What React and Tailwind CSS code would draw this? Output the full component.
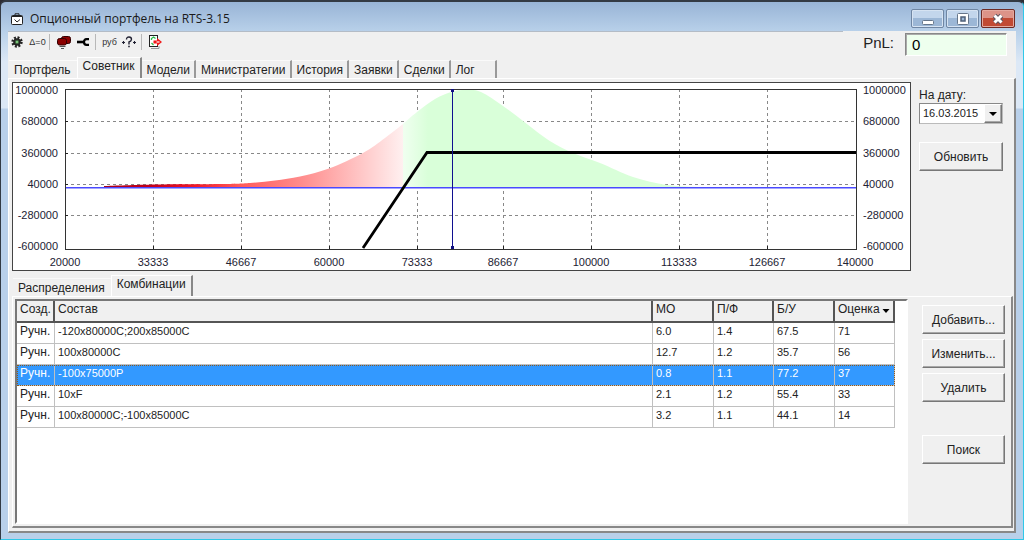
import React, { useState } from "react";

const mainTabs = ["Портфель", "Советник", "Модели", "Министратегии", "История", "Заявки", "Сделки", "Лог"];
const subTabs = ["Распределения", "Комбинации"];

const rows = [
  ["Ручн.", "-120x80000C;200x85000C", "6.0", "1.4", "67.5", "71"],
  ["Ручн.", "100x80000C", "12.7", "1.2", "35.7", "56"],
  ["Ручн.", "-100x75000P", "0.8", "1.1", "77.2", "37"],
  ["Ручн.", "10xF", "2.1", "1.2", "55.4", "33"],
  ["Ручн.", "100x80000C;-100x85000C", "3.2", "1.1", "44.1", "14"],
];

const yTicks = [
  { y: 90, label: "1000000" },
  { y: 121, label: "680000" },
  { y: 153, label: "360000" },
  { y: 184, label: "40000" },
  { y: 215, label: "-280000" },
  { y: 246, label: "-600000" },
];

const xTicks = [
  { x: 65, label: "20000" },
  { x: 153, label: "33333" },
  { x: 241, label: "46667" },
  { x: 329, label: "60000" },
  { x: 417, label: "73333" },
  { x: 503, label: "86667" },
  { x: 591, label: "100000" },
  { x: 679, label: "113333" },
  { x: 767, label: "126667" },
  { x: 855, label: "140000" },
];

const lossCurve = [
  [104, 186], [156, 184.5], [225, 184], [250, 183], [275, 180.5], [300, 176.5],
  [329, 168.5], [363, 153], [385, 138], [403, 124],
];

const profitCurve = [
  [403, 124], [417, 112], [435, 99], [453, 91.5], [467, 90], [481, 92], [503, 106],
  [525, 122.5], [549, 140.5], [573, 153], [600, 163], [633, 177], [667, 185], [700, 187],
];

// Catmull-Rom spline through the points, closed down to the zero line
function area(points) {
  let d = `M${points[0][0]} 188V${points[0][1]}`;
  for (let i = 0; i < points.length - 1; i++) {
    const p0 = points[i - 1] || points[i];
    const p1 = points[i];
    const p2 = points[i + 1];
    const p3 = points[i + 2] || p2;
    d += `C${p1[0] + (p2[0] - p0[0]) / 6} ${p1[1] + (p2[1] - p0[1]) / 6} ${p2[0] - (p3[0] - p1[0]) / 6} ${
      p2[1] - (p3[1] - p1[1]) / 6
    } ${p2[0]} ${p2[1]}`;
  }
  return d + "V188Z";
}

const bevel =
  "border border-t-white border-l-white border-r-[#777] border-b-[#777] shadow-[inset_-1px_-1px_0_#a8a8a8]";

function PushButton({ children, className = "" }) {
  return (
    <button type="button" className={`h-[29px] w-full bg-[#f0f0f0] text-center ${bevel} ${className}`}>
      {children}
    </button>
  );
}

function Separator() {
  return <span className="h-4 w-px bg-[#b8b8b8]" />;
}

function ToolButton({ label, children, className = "" }) {
  return (
    <button type="button" aria-label={label} className={`flex h-4 items-center justify-center ${className}`}>
      {children}
    </button>
  );
}

function TitleBar() {
  return (
    <header className="flex h-[29px] items-center pt-1">
      <svg className="ml-[3px] size-3" viewBox="0 0 12 12" fill="none" stroke="#222">
        <rect x="0.5" y="2.5" width="11" height="9" rx="1" fill="#fff" />
        <path d="M4 2.5V0.8h4v1.7M1 3.5h10" />
        <path d="M3.5 6.500l2.500 2.500 3-2.500" />
      </svg>
      <h1 className="ml-[7px] flex-1 font-['Open_Sans','Noto_Sans',sans-serif] text-xs text-[#1a1a1a]">
        Опционный портфель на RTS-3.15
      </h1>
      <div className="mr-px flex gap-0.5 self-end pb-[3px]">
        <button
          type="button"
          aria-label="Свернуть"
          className="flex h-[19px] w-[33px] items-center justify-center rounded-xs border border-[#6f86a3] bg-linear-to-b from-[#c3d6ec] from-45% to-[#9cb7d6] to-50% shadow-[inset_0_0_0_1px_#d6e3f2]"
        >
          <svg className="h-3 w-4" viewBox="0 0 16 12">
            <rect x="2.5" y="7.5" width="11" height="4" rx="1" fill="#fff" stroke="#66768a" />
          </svg>
        </button>
        <button
          type="button"
          aria-label="Развернуть"
          className="flex h-[19px] w-[33px] items-center justify-center rounded-xs border border-[#6f86a3] bg-linear-to-b from-[#c3d6ec] from-45% to-[#9cb7d6] to-50% shadow-[inset_0_0_0_1px_#d6e3f2]"
        >
          <svg className="h-3 w-4" viewBox="0 0 16 12">
            <rect x="2.500" y="0.500" width="11" height="11" rx="1" fill="#fff" stroke="#66768a" />
            <rect x="6" y="4" width="4" height="4" fill="#9cb7d6" stroke="#4f6078" strokeWidth="1.5" />
          </svg>
        </button>
        <button
          type="button"
          aria-label="Закрыть"
          className="flex h-[19px] w-[34px] items-center justify-center rounded-xs border border-[#6e2a24] bg-linear-to-b from-[#dc9388] from-45% to-[#c14a34] to-50% shadow-[inset_0_0_0_1px_#e4a99f]"
        >
          <svg className="h-3 w-4" viewBox="0 0 16 12" fill="none">
            <path d="M4.500 2.500l7 7M11.500 2.500l-7 7" stroke="#5e5560" strokeWidth="5" />
            <path d="M4.500 2.500l7 7M11.500 2.500l-7 7" stroke="#fff" strokeWidth="3" />
          </svg>
        </button>
      </div>
    </header>
  );
}

function Toolbar() {
  return (
    <div className="flex h-[26px] items-start">
      <div className="flex flex-1 items-center border-t border-[#b4bcc6] pt-0.5 pl-[3px]">
        <ToolButton label="Настройки">
          <svg className="size-3" viewBox="0 0 12 12" fill="none">
            <circle cx="6" cy="6" r="4.4" stroke="#222" strokeWidth="2.6" strokeDasharray="1.9 1.55" />
            <circle cx="6" cy="6" r="3" fill="#3a5a3a" stroke="#222" strokeWidth="1.600" />
            <circle cx="6" cy="6" r="1.300" fill="#79c679" />
          </svg>
        </ToolButton>
        <ToolButton label="Дельта ноль" className="ml-[7px] w-[15px] text-[9px] text-[#333]">
          Δ=0
        </ToolButton>
        <div className="ml-[4px] flex">
          <Separator />
        </div>
        <ToolButton label="Стоп" className="ml-[7px]">
          <svg className="h-[14px] w-[14px]" viewBox="0 0 14 14">
            <rect x="4.500" y="1.500" width="9" height="7" rx="2" fill="#8b0000" stroke="#300" />
            <rect x="0.500" y="3.500" width="9" height="6.500" rx="2" fill="#8b0000" stroke="#300" />
            <path d="M2.500 11.500h6M4 13.500h3" stroke="#555" />
          </svg>
        </ToolButton>
        <ToolButton label="Инструменты" className="ml-[6px]">
          <svg className="h-2 w-3" viewBox="0 0 12 8" fill="none" stroke="#000">
            <path d="M0 4h7" strokeWidth="2.600" />
            <path d="M12 1.200H9.500Q7 1.200 7 4t2.500 2.800H12" strokeWidth="2.200" />
          </svg>
        </ToolButton>
        <div className="ml-[6px] flex">
          <Separator />
        </div>
        <ToolButton label="Рубли" className="ml-[6px] w-[15px] text-[9px] text-[#333]">
          руб
        </ToolButton>
        <ToolButton label="Справка" className="ml-[5px]">
          <svg className="h-3 w-[14px]" viewBox="0 0 14 12" fill="none" stroke="#223">
            <path d="M4.500 3.500Q4.500 1 7 1t2.500 2.300Q9.500 5 7 6v2.500" strokeWidth="1.400" />
            <path d="M6.200 10.500h1.600" strokeWidth="1.600" />
            <path d="M0 6.500h3M1.500 5v3M11 6.500h3M12.500 5v3" strokeWidth="1.100" />
          </svg>
        </ToolButton>
        <div className="ml-[5px] flex">
          <Separator />
        </div>
        <ToolButton label="Выход" className="ml-[7px]">
          <svg className="h-[14px] w-[13px]" viewBox="0 0 13 14" fill="none">
            <path d="M2 13.500h8V11" stroke="#999" />
            <rect x="0.500" y="0.500" width="8" height="11" fill="#fff" stroke="#222" />
            <path d="M2.500 5V3.500L4.500 2 6.500 3.500M2.500 8l2 2" stroke="#2bbf4b" strokeWidth="1.300" />
            <path d="M4.500 5.500H8V3l5 4-5 4V8.500H4.500z" fill="#f01818" />
            <path d="M7.500 7h3" stroke="#fff" strokeWidth="1.200" />
          </svg>
        </ToolButton>
      </div>
      <div className="flex items-start pt-0.5 pr-[9px] pl-5">
        <label htmlFor="pnl" className="text-[15px] leading-5">
          PnL:
        </label>
        <input
          id="pnl"
          type="text"
          defaultValue="0"
          className="ml-[11px] h-[23px] w-[102px] border border-t-[#888] border-r-white border-b-white border-l-[#888] bg-[#eeffee] px-1.5 text-[15px] text-black shadow-[inset_1px_1px_0_#aaa]"
        />
      </div>
    </div>
  );
}

function Tabs({ items, active, onSelect, className = "" }) {
  return (
    <div role="tablist" className={`flex items-end ${className}`}>
      {items.map((item, i) => (
        <button
          key={item}
          type="button"
          role="tab"
          aria-selected={i === active}
          onClick={() => onSelect(i)}
          className={
            i === active
              ? "h-[21px] border-t border-r-2 border-l border-t-white border-r-[#888] border-l-white px-[5px] pb-1"
              : `h-[18px] border-t border-t-[#fafafa] pl-[5px] ${
                  i > active ? "border-r-2 border-r-[#999] pr-1" : "pr-1.5"
                } ${item === "Лог" ? "w-[46px] text-left" : ""}`
          }
        >
          {item}
        </button>
      ))}
    </div>
  );
}

function Chart() {
  return (
    <div className="flex-1 border border-[#444] bg-white">
      <svg className="block h-auto w-full text-[11px]" viewBox="13 83 897 187" fill="#223">
        <defs>
          <linearGradient id="loss" gradientUnits="userSpaceOnUse" x1="104" x2="403" y1="0" y2="0">
            <stop offset="0" stopColor="#a80018" />
            <stop offset="0.16" stopColor="#c4001c" />
            <stop offset="0.3" stopColor="#f01828" />
            <stop offset="0.45" stopColor="#ff5858" />
            <stop offset="0.66" stopColor="#ff8c8c" />
            <stop offset="1" stopColor="#fff0f0" />
          </linearGradient>
          <linearGradient id="profit" gradientUnits="userSpaceOnUse" x1="403" x2="428" y1="0" y2="0">
            <stop offset="0" stopColor="#f0fff0" />
            <stop offset="1" stopColor="#d9ffd9" />
          </linearGradient>
        </defs>

        {/* Grid */}
        <g stroke="#888" strokeDasharray="3 3">
          {yTicks.slice(1, 5).map((t) => (
            <path key={t.y} d={`M65 ${t.y + 0.5}H857`} />
          ))}
          {xTicks.slice(1, 9).map((t) => (
            <path key={t.x} d={`M${t.x + 0.5} 89V249`} />
          ))}
        </g>

        {/* Distribution */}
        <path fill="url(#loss)" d={area(lossCurve)} />
        <path fill="url(#profit)" d={area(profitCurve)} />
        <rect x="65" y="187" width="792" height="1.500" fill="#4a4aff" />

        {/* Plot frame */}
        <rect x="65.500" y="89.500" width="791" height="160" fill="none" stroke="#333" />
        <g stroke="#222">
          {yTicks.slice(1, 5).map((t) => (
            <path key={t.y} d={`M65 ${t.y + 0.5}h3`} />
          ))}
          {xTicks.slice(1, 9).map((t) => (
            <path key={t.x} d={`M${t.x + 0.5} 249v-3`} />
          ))}
        </g>

        {/* Payoff and current price */}
        <path d="M363 248L427 152.500H856" fill="none" stroke="#000" strokeWidth="2.800" />
        <path d="M452.500 90V248" stroke="#101090" />
        <path d="M451 89h3v3h-3zM451 246h3v3h-3z" fill="#101080" />

        {yTicks.map((t) => (
          <g key={t.y}>
            <text x="58" y={t.y + 4} textAnchor="end">
              {t.label}
            </text>
            <text x="863" y={t.y + 4}>
              {t.label}
            </text>
          </g>
        ))}
        {xTicks.map((t) => (
          <text key={t.x} x={t.x} y="266" textAnchor="middle">
            {t.label}
          </text>
        ))}
      </svg>
    </div>
  );
}

function CombinationsTable() {
  const [selected, setSelected] = useState(2);
  const head =
    "h-[22px] border-r-2 border-b-2 border-r-[#555] border-b-[#555] bg-[#f0f0f0] px-[3px] pb-1 text-left font-normal";

  return (
    <div className="flex-1 border-2 border-t-[#777] border-r-white border-b-white border-l-[#777] bg-white pr-[11px]">
      <table className="w-full table-fixed border-separate border-spacing-0 leading-4">
        <thead>
          <tr>
            <th className={`w-[38px] ${head}`}>Созд.</th>
            <th className={head}>Состав</th>
            <th className={`w-[61px] ${head}`}>МО</th>
            <th className={`w-[60px] ${head}`}>П/Ф</th>
            <th className={`w-[61px] ${head}`}>Б/У</th>
            <th className={`w-[60px] ${head}`}>
              <span className="flex items-center justify-between">
                Оценка
                <svg className="mt-1 h-1 w-2" viewBox="0 0 8 4">
                  <path d="M0.500 0h7L4 4z" />
                </svg>
              </span>
            </th>
          </tr>
        </thead>
        <tbody>
          {rows.map((row, i) => (
            <tr
              key={row[1]}
              onClick={() => setSelected(i)}
              className={
                i === selected ? "bg-[#3399ff] text-white outline-1 -outline-offset-1 outline-dotted outline-[#8a5a20]" : ""
              }
            >
              {row.map((cell, j) => (
                <td
                  key={j}
                  className={`h-[21px] border-r border-b border-[#c0c0c0] px-[3px] pb-1 ${j === 0 ? "" : "text-[11px]"}`}
                >
                  {cell}
                </td>
              ))}
            </tr>
          ))}
        </tbody>
      </table>
    </div>
  );
}

export default function App() {
  const [tab, setTab] = useState(1);
  const [subTab, setSubTab] = useState(1);

  return (
    <div className="flex min-h-screen bg-[#2b2b33] font-['Liberation_Sans',Arial,sans-serif] text-xs text-[#222]">
      <div className="flex flex-1 flex-col rounded-t-md border border-t-2 border-[#333a44] border-r-[#30c8e8] border-b-[#30c8e8] bg-[linear-gradient(#98b4d6,#b9d1ea_30px,#dce8f6_60px,#dce8f6_106px,#b9d0ea_107px)] px-[7px] pb-[6px]">
        <TitleBar />
        <main className="flex flex-1 flex-col bg-[#f0f0f0]">
          <Toolbar />
          <Tabs items={mainTabs} active={tab} onSelect={setTab} className="px-px" />
          <section className="flex flex-1 flex-col border-t border-r-2 border-b-2 border-l border-t-white border-r-[#888] border-b-[#888] border-l-white pt-[3px] pr-px pb-[3px] pl-[3px]">
            <div className="flex items-start">
              <Chart />
              <div className="w-[102px] pt-[5px] pr-[10px] pl-2">
                <label htmlFor="date" className="block leading-4">
                  На дату:
                </label>
                <div className="relative">
                  <select
                    id="date"
                    className="h-[21px] w-full appearance-none border border-[#888] border-r-[#bbb] border-b-[#bbb] bg-white pl-[3px] text-[11px] text-[#222]"
                  >
                    <option>16.03.2015</option>
                  </select>
                  <span
                    className={`pointer-events-none absolute top-px right-px flex h-[19px] w-[18px] items-center justify-center bg-[#f0f0f0] ${bevel}`}
                  >
                    <svg className="h-1 w-2" viewBox="0 0 8 4">
                      <path d="M0 0h8L4 4z" />
                    </svg>
                  </span>
                </div>
                <PushButton className="mt-[18px]">Обновить</PushButton>
              </div>
            </div>

            <Tabs items={subTabs} active={subTab} onSelect={setSubTab} className="mt-1 pl-px" />
            <div className="flex flex-1 border-t border-r-2 border-b-2 border-l border-t-white border-r-[#888] border-b-[#888] border-l-white py-0.5 pl-0.5">
              <CombinationsTable />
              <div className="flex w-[103px] flex-col gap-[5px] pt-[6px] pr-[6px] pl-[14px]">
                <PushButton>Добавить...</PushButton>
                <PushButton>Изменить...</PushButton>
                <PushButton>Удалить</PushButton>
                <PushButton className="mt-7">Поиск</PushButton>
              </div>
            </div>
          </section>
        </main>
      </div>
    </div>
  );
}
